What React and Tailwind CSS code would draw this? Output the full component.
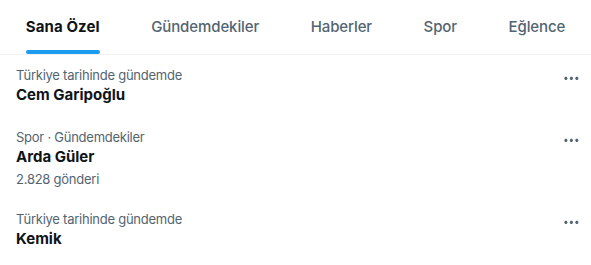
const tabs = ["Sana Özel", "Gündemdekiler", "Haberler", "Spor", "Eğlence"];

const trends = [
  { context: "Türkiye tarihinde gündemde", name: "Cem Garipoğlu" },
  { context: "Spor · Gündemdekiler", name: "Arda Güler", posts: "2.828 gönderi" },
  { context: "Türkiye tarihinde gündemde", name: "Kemik" },
];

const MoreIcon = () => (
  <svg viewBox="0 0 24 24" className="w-[18.75px] h-[18.75px] fill-[#536471]">
    <path d="M3 12c0-1.1.9-2 2-2s2 .9 2 2-.9 2-2 2-2-.9-2-2zm9 2c1.1 0 2-.9 2-2s-.9-2-2-2-2 .9-2 2 .9 2 2 2zm7 0c1.1 0 2-.9 2-2s-.9-2-2-2-2 .9-2 2 .9 2 2 2z" />
  </svg>
);

export default function App() {
  return (
    <div
      className="w-[591px] h-[265px] bg-white overflow-hidden text-[#0f1419]"
      style={{ fontFamily: "Inter, 'Noto Sans', sans-serif" }}
    >
      {/* sekmeler */}
      <div className="flex h-[55px] border-b border-[#eff3f4]">
        {tabs.map((tab, i) => (
          <div key={tab} className="flex-auto flex justify-center px-4">
            <div className="relative flex items-center h-full">
              <span
                className={
                  i === 0
                    ? "text-[15px] font-bold tracking-[0.1px] text-[#0f1419]"
                    : "text-[15px] font-medium tracking-[-0.1px] text-[#536471]"
                }
              >
                {tab}
              </span>
              {i === 0 && (
                <div className="absolute bottom-0 left-0 right-0 h-1 rounded-full bg-[#1d9bf0]" />
              )}
            </div>
          </div>
        ))}
      </div>

      {/* gündem listesi */}
      {trends.map((trend) => (
        <div key={trend.name} className="flex justify-between px-4 py-3">
          <div className="flex flex-col">
            <span className="text-[13px] leading-4 tracking-[-0.25px] text-[#536471]">{trend.context}</span>
            <span className="pt-0.5 text-[15px] leading-5 font-bold">{trend.name}</span>
            {trend.posts && (
              <span className="pt-1 text-[13px] leading-4 tracking-[-0.25px] text-[#536471]">{trend.posts}</span>
            )}
          </div>
          <div className="-mr-1.5 mt-0.5">
            <MoreIcon />
          </div>
        </div>
      ))}
    </div>
  );
}
